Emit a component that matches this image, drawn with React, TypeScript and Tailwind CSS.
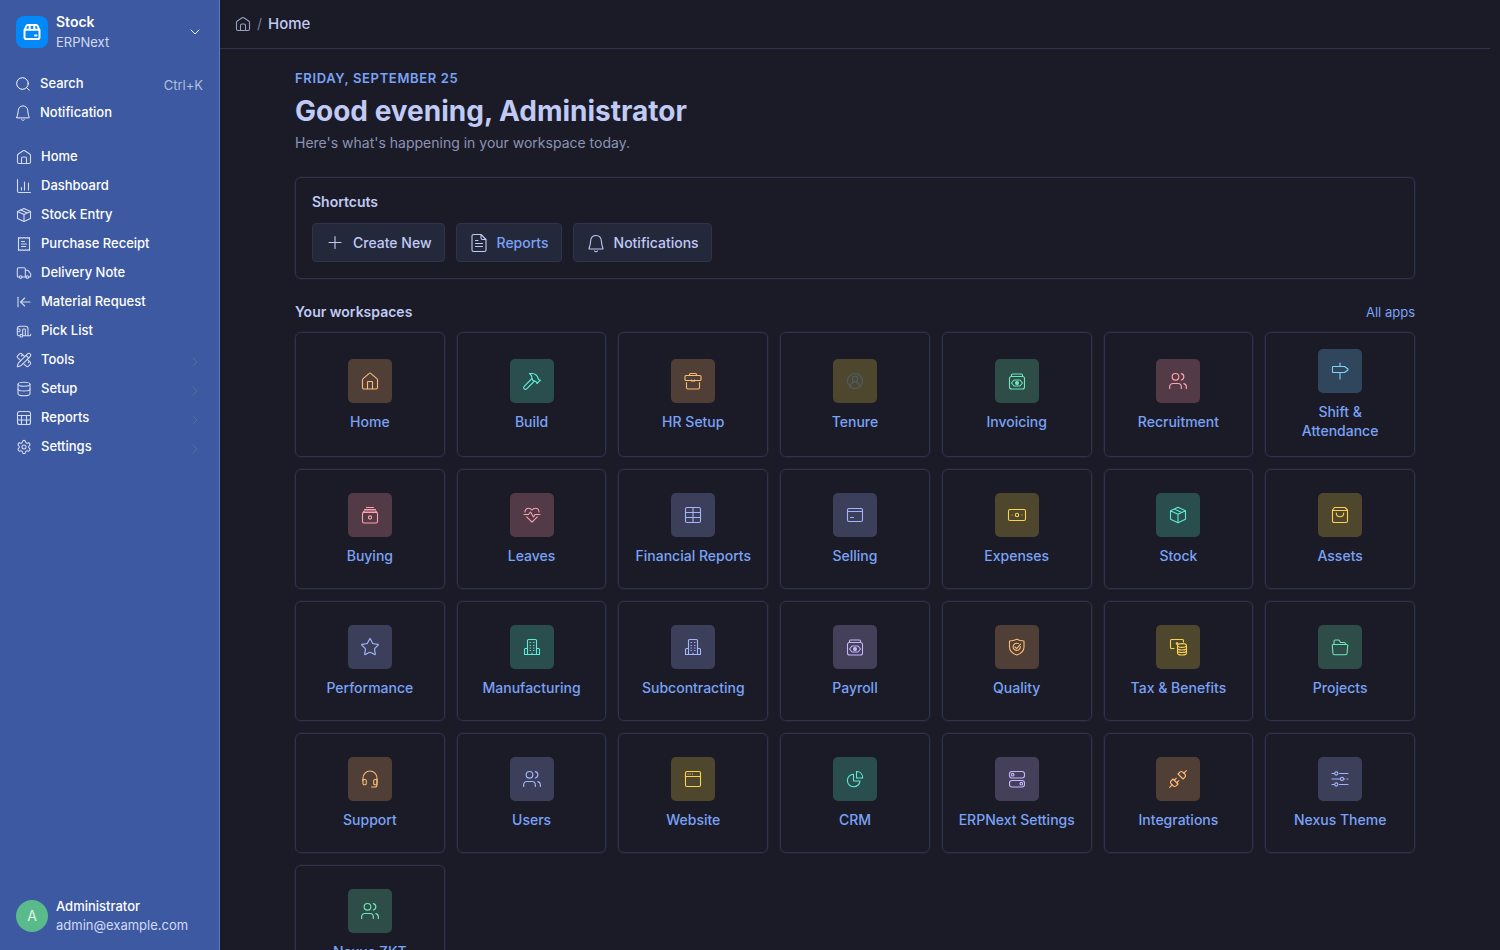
import type { ReactNode } from "react";
import {
  ArrowLeftToLine,
  Caravan,
  ChevronDown,
  ChevronRight,
  Database,
  Hammer,
  PencilRuler,
  Settings,
  Star,
  Truck,
  Unplug,
  Users,
} from "lucide-react";

type SvgProps = { size: number; children: ReactNode; className?: string };

function Svg({ size, children, className }: SvgProps) {
  return (
    <svg
      width={size}
      height={size}
      viewBox={`0 0 ${size} ${size}`}
      fill="none"
      stroke="currentColor"
      strokeWidth="1.1"
      strokeLinecap="round"
      strokeLinejoin="round"
      aria-hidden="true"
      className={className}
    >
      {children}
    </svg>
  );
}

const glyph = (children: ReactNode) => <Svg size={20}>{children}</Svg>;
const small = (children: ReactNode) => <Svg size={16}>{children}</Svg>;

const homeSmall = small(
  <>
    <path d="M1.5 6.4c0-.6.3-1.1.8-1.4L7.2 1.8a1.5 1.5 0 0 1 1.6 0L13.7 5c.5.3.8.8.8 1.4V13c0 .8-.7 1.5-1.5 1.5H3c-.8 0-1.5-.7-1.5-1.5z" />
    <path d="M5.5 14.5V9.500c0-.8.7-1.5 1.5-1.5h2c.8 0 1.5.7 1.5 1.5v5" />
  </>,
);

const packageSmall = small(
  <>
    <path d="M8 1.500 14.500 4.500v7L8 14.500 1.500 11.500v-7z" />
    <path d="M1.500 4.500 8 7.500l6.500-3M8 7.500v7M4.700 3l6.500 3" />
  </>,
);

const bell = (
  <>
    <path d="M3 15.500 3.800 13c.5-1.700.6-3 .8-5 .3-3.300 2.400-5.500 5.400-5.500s5.100 2.200 5.400 5.500c.2 2 .3 3.300.8 5l.8 2.500c.2.400 0 .5-.4.5H3.400c-.4 0-.6-.1-.4-.5z" />
    <path d="M8.500 18c.4.5.9.7 1.500.7s1.100-.2 1.500-.7" />
  </>
);

const icons: Record<string, ReactNode> = {
  home: glyph(<path d="M2.500 8.800c0-.5.2-.9.6-1.200L9.300 2.300a1 1 0 0 1 1.400 0l6.200 5.300c.4.3.6.7.6 1.200V16.500c0 .8-.7 1.500-1.500 1.500H4c-.8 0-1.500-.7-1.500-1.500zM7.500 18v-7c0-.3.200-.5.500-.5h4c.3 0 .5.200.5.500v7" />),
  build: <Hammer size={20} strokeWidth={1.400} />,
  hr: glyph(
    <>
      <path d="M6.500 4.500V3.500c0-.6.400-1 1-1h5c.6 0 1 .4 1 1v1" />
      <path d="M3 4.500h14c.6 0 1 .4 1 1v3c0 .6-.4 1-1 1H3c-.6 0-1-.4-1-1v-3c0-.6.4-1 1-1z" />
      <path d="M8.500 9a.5.5 0 0 0 .5 1h2a.5.5 0 0 0 .5-1M3.500 11.500v5c0 .8.700 1.500 1.500 1.500h10c.8 0 1.500-.7 1.500-1.500v-5" />
    </>,
  ),
  tenure: glyph(
    <>
      <circle cx="10" cy="10" r="7.500" />
      <rect x="7.500" y="5" width="5" height="6" rx="2.500" />
      <path d="M5 15.500c.5-2.500 1.700-3.500 3.500-4.500M15 15.500c-.5-2.500-1.700-3.500-3.500-4.500" />
    </>,
  ),
  money: glyph(
    <>
      <path d="M4.500 5V4c0-.6.400-1 1-1h9c.6 0 1 .4 1 1v1" />
      <rect x="2.500" y="5.500" width="15" height="12.500" rx="2" />
      <path d="M4.500 12 7 9h6l2.500 3-2.500 3H7z" />
      <circle cx="10" cy="12" r="1.500" fill="currentColor" />
    </>,
  ),
  users: <Users size={20} strokeWidth={1.400} />,
  sign: glyph(<path d="M10 2v3.500M10 11.500V18M3 5.500h11.500l3.500 2.500v1l-3.500 2.500H3c-.3 0-.5-.2-.5-.5V6c0-.3.200-.5.500-.5z" />),
  buying: glyph(
    <>
      <path d="M6.500 2.500h7M4.500 4.500h11" />
      <path d="M3 7.500 4.500 6h11L17 7.500" />
      <rect x="2.500" y="7.500" width="15" height="10.500" rx="1.500" />
      <circle cx="10" cy="12.500" r="1.600" />
    </>,
  ),
  heart: glyph(
    <>
      <path d="M3 7c0-2.200 1.500-3.700 3.500-3.700 1.500 0 2.600.6 3.500 1.700.9-1.100 2-1.700 3.500-1.700C15.500 3.300 17 4.800 17 7" />
      <path d="M2 9.500h4.500L8.500 7l3 5 1.500-2.500h5" />
      <path d="M4.700 11.800 10 17.200l5.300-5.400" />
    </>,
  ),
  table: glyph(
    <>
      <rect x="2.500" y="2.500" width="15" height="15" rx="1.500" />
      <path d="M2.500 7.500h15M2.500 12.500h15M10 2.500v15" />
    </>,
  ),
  card: glyph(
    <>
      <rect x="2.500" y="3.500" width="15" height="13" rx="1.500" />
      <path d="M2.500 6.500h15M5.500 12.500h3" />
    </>,
  ),
  cash: glyph(
    <>
      <rect x="1.500" y="4.500" width="17" height="11" rx="1.500" />
      <circle cx="10" cy="10" r="1.700" />
      <path d="M5 10h.1M15 10h.1" />
    </>,
  ),
  box: glyph(<path d="m10 2.300 7.500 3.500v8.400L10 17.700l-7.500-3.500V5.800zM2.500 5.800 10 9.300l7.500-3.500M10 9.300v8.400M6.200 4l7.500 3.500" />),
  bag: glyph(
    <>
      <path d="M4.500 2.500h10.500l2.500 2.500v11c0 .8-.7 1.500-1.500 1.500H4c-.8 0-1.500-.7-1.500-1.500V5z" />
      <path d="M2.500 5.500h15M6.300 8c0 2.200 1.500 3.700 3.700 3.700s3.700-1.500 3.700-3.700" />
    </>,
  ),
  star: <Star size={20} strokeWidth={1.400} />,
  building: glyph(
    <>
      <path d="M5.500 17.500V3.500c0-.6.400-1 1-1h7c.6 0 1 .4 1 1v14" />
      <path d="M5.500 11.500h-2c-.6 0-1 .4-1 1v5h15v-5c0-.6-.4-1-1-1h-2M10 17.500V16" />
      <path d="M8 5.500h.5M11.500 5.500h.5M8 8.500h.5M11.500 8.500h.5M8 11h.5M11.500 11h.5M8 13.500h.5M11.500 13.500h.5" />
    </>,
  ),
  shield: glyph(
    <>
      <path d="M9.800 2.300c2.200 1.200 4.500 1.700 7.200 1.700v6c0 4-2.700 6.500-7.200 8-4.500-1.500-7.300-4-7.300-8V4c2.700 0 5-.5 7.300-1.700z" />
      <path d="M13.300 9.500a3.600 3.600 0 1 1-2-2.900M8 10l1.700 1.700 3.800-4.500" />
    </>,
  ),
  coins: glyph(
    <>
      <path d="M6 11.500H3.500c-.6 0-1-.4-1-1v-7c0-.6.400-1 1-1h11c.6 0 1 .4 1 1V5" />
      <circle cx="9" cy="6.500" r=".8" fill="currentColor" />
      <ellipse cx="14" cy="8.500" rx="4.500" ry="1.900" />
      <path d="M9.500 8.500V16c0 1.100 2 2 4.500 2s4.500-.9 4.500-2V8.500M9.500 11c0 1.100 2 2 4.500 2s4.500-.9 4.500-2M9.500 13.500c0 1.100 2 2 4.500 2s4.500-.9 4.500-2" />
    </>,
  ),
  folder: glyph(
    <>
      <path d="M4 7V4.500c0-.8.500-1.500 1.300-1.500h3c.5 0 1 .2 1.200.7L10.500 5.500H14c.8 0 1.500.5 1.500 1.500" />
      <path d="M3.200 7.500h13.600c.6 0 1 .4.9 1l-.6 7.700c-.1.900-.8 1.500-1.600 1.500h-11c-.8 0-1.500-.6-1.600-1.500L2.300 8.500c-.1-.6.300-1 .9-1z" />
    </>,
  ),
  headset: glyph(
    <>
      <path d="M3 12V9a7 7 0 0 1 14 0v7c0 1.300-.8 2-2 2h-3.500" />
      <path d="M3 10.500h2c.8 0 1.300.5 1.300 1.300v2.700c0 .8-.5 1.300-1.300 1.300h-.7c-.8 0-1.300-.5-1.300-1.300zM17 10.500h-2c-.8 0-1.300.5-1.300 1.300v2.700c0 .8.500 1.300 1.300 1.300h.7c.8 0 1.300-.5 1.300-1.300z" />
    </>,
  ),
  browser: glyph(
    <>
      <rect x="2.500" y="2.500" width="15" height="15" rx="1.500" />
      <path d="M2.500 7.500h15M5 5h.1M7.200 5h.1M9.400 5h.1" />
    </>,
  ),
  pie: glyph(
    <>
      <path d="M8.500 5.200a6.300 6.300 0 1 0 6.500 6.800H9c-.3 0-.5-.2-.5-.5z" />
      <path d="M11.500 2.500v6.500h6.200c0-3.900-2.500-6.500-6.200-6.500z" />
    </>,
  ),
  toggles: glyph(
    <>
      <rect x="2.500" y="2.500" width="15" height="6.500" rx="2.500" />
      <rect x="2.500" y="11.500" width="15" height="6.500" rx="2.500" />
      <circle cx="5.700" cy="5.700" r="1.300" />
      <circle cx="14.300" cy="14.700" r="1.300" />
    </>,
  ),
  plug: <Unplug size={20} strokeWidth={1.400} />,
  sliders: glyph(
    <>
      <path d="M2 4.500h2.300M9.500 4.500H18M2 10h8M14 10h1M17 10h1M2 15.500h2.300M9.500 15.500H18" />
      <circle cx="6.300" cy="4.500" r="1.600" />
      <circle cx="12" cy="10" r="1.600" />
      <circle cx="6.300" cy="15.500" r="1.600" />
    </>,
  ),
};

const tones = {
  orange: "bg-[#4f3f37] text-[#fdba74]",
  teal: "bg-[#2a4d4e] text-[#5eead4]",
  yellow: "bg-[#4f462e] text-[#fcd34d]",
  muted: "bg-[#4f462e] text-[#4b5f6b]",
  green: "bg-[#2e4d49] text-[#6ee7b7]",
  rose: "bg-[#523a46] text-[#fda4af]",
  sky: "bg-[#30465c] text-[#7dd3fc]",
  indigo: "bg-[#3b3f5a] text-[#a5b4fc]",
  violet: "bg-[#45405a] text-[#c4b5fd]",
};

const workspaces: [string, string, keyof typeof tones][] = [
  ["Home", "home", "orange"],
  ["Build", "build", "teal"],
  ["HR Setup", "hr", "orange"],
  ["Tenure", "tenure", "muted"],
  ["Invoicing", "money", "green"],
  ["Recruitment", "users", "rose"],
  ["Shift & Attendance", "sign", "sky"],
  ["Buying", "buying", "rose"],
  ["Leaves", "heart", "rose"],
  ["Financial Reports", "table", "indigo"],
  ["Selling", "card", "indigo"],
  ["Expenses", "cash", "yellow"],
  ["Stock", "box", "teal"],
  ["Assets", "bag", "yellow"],
  ["Performance", "star", "indigo"],
  ["Manufacturing", "building", "teal"],
  ["Subcontracting", "building", "indigo"],
  ["Payroll", "money", "violet"],
  ["Quality", "shield", "orange"],
  ["Tax & Benefits", "coins", "yellow"],
  ["Projects", "folder", "green"],
  ["Support", "headset", "orange"],
  ["Users", "users", "indigo"],
  ["Website", "browser", "yellow"],
  ["CRM", "pie", "teal"],
  ["ERPNext Settings", "toggles", "violet"],
  ["Integrations", "plug", "orange"],
  ["Nexus Theme", "sliders", "indigo"],
  ["Nexus ZKT", "users", "green"],
];

const navItems: { label: string; icon: ReactNode; group?: boolean }[] = [
  { label: "Home", icon: homeSmall },
  {
    label: "Dashboard",
    icon: small(<path d="M1.500 1.500V13c0 .8.700 1.500 1.500 1.500h11.500M5.500 9.500V12M8.500 4v8M12.500 5v7" />),
  },
  { label: "Stock Entry", icon: packageSmall },
  {
    label: "Purchase Receipt",
    icon: small(
      <>
        <path d="M2.500 1.500 4 2.200l1.300-.7 1.300.7L8 1.500l1.400.7 1.300-.7 1.300.7 1.500-.7v13l-1.500-.7-1.300.7-1.300-.7-1.400.7-1.400-.7-1.300.7-1.300-.7-1.500.7z" />
        <path d="M5.500 5.500h3M5.500 8h5M5.500 10.500h4" />
      </>,
    ),
  },
  { label: "Delivery Note", icon: <Truck size={16} strokeWidth={1.600} /> },
  { label: "Material Request", icon: <ArrowLeftToLine size={16} strokeWidth={1.600} /> },
  { label: "Pick List", icon: <Caravan size={16} strokeWidth={1.600} /> },
  { label: "Tools", icon: <PencilRuler size={16} strokeWidth={1.600} />, group: true },
  { label: "Setup", icon: <Database size={16} strokeWidth={1.600} />, group: true },
  {
    label: "Reports",
    icon: small(
      <>
        <rect x="1.500" y="1.500" width="13" height="13" rx="2" />
        <path d="M1.500 5.500h13M1.500 10h13M5.500 5.500v9M10.500 5.500v9" />
      </>,
    ),
    group: true,
  },
  { label: "Settings", icon: <Settings size={16} strokeWidth={1.600} />, group: true },
];

function Sidebar() {
  return (
    <aside className="flex w-[220px] shrink-0 flex-col border-r border-[#5f7ac0] bg-[#3d59a1] text-[13px] font-medium text-white">
      <button type="button" className="flex items-center gap-2 px-4 pt-3 text-left">
        <span className="flex size-8 shrink-0 items-center justify-center rounded-lg bg-[#0289f7]">
          <svg width="18" height="18" viewBox="0 0 18 18" fill="none" stroke="#fff" strokeWidth="2" strokeLinejoin="round" strokeLinecap="round" aria-hidden="true">
            <path d="M1.500 7.500 3.300 3c.3-.6.800-1 1.500-1h8.400c.7 0 1.200.4 1.500 1l1.800 4.500v6.700c0 1-.8 1.800-1.800 1.800H3.300c-1 0-1.800-.8-1.800-1.800zM1.500 6.800h15M6.800 2.500 6.500 6.500M11.200 2.500l.3 4" />
            <path d="M12 12.500h1.500" />
          </svg>
        </span>
        <span className="grow">
          <span className="block text-sm leading-5 font-semibold">Stock</span>
          <span className="block leading-5 font-normal text-[#d3dbf3]">ERPNext</span>
        </span>
        <ChevronDown size={16} strokeWidth={1.400} />
      </button>

      <div className="mt-[18px] flex flex-col gap-px">
        <button type="button" className="flex h-7 items-center gap-[10px] px-4 text-left">
          <svg width="14" height="14" viewBox="0 0 14 14" fill="none" stroke="currentColor" strokeLinecap="round" aria-hidden="true">
            <circle cx="6.500" cy="6.500" r="5.800" />
            <path d="m11 11 2.300 2.300" />
          </svg>
          <span className="grow">Search</span>
          <span className="pt-1 font-normal text-[#b1bddd]">Ctrl+K</span>
        </button>
        <button type="button" className="flex h-7 items-center gap-[10px] px-4 text-left text-white">
          <svg width="14" height="16" viewBox="2.500 1.500 15 18" fill="none" stroke="currentColor" strokeLinecap="round" strokeLinejoin="round" aria-hidden="true">
            {bell}
          </svg>
          <span>Notification</span>
        </button>
      </div>

      <nav className="mt-4 flex grow flex-col gap-px" aria-label="Stock">
        {navItems.map((item) => (
          <a key={item.label} href="#" className="flex h-7 items-center gap-[9px] px-4">
            <span className="text-[#d5dcef]">{item.icon}</span>
            <span className="grow">{item.label}</span>
            {item.group && <ChevronRight size={16} strokeWidth={1.400} className="mt-1 text-[#4f7590]" />}
          </a>
        ))}
      </nav>

      <button type="button" className="flex items-center gap-2 px-4 pb-[15px] text-left">
        <span className="flex size-8 shrink-0 items-center justify-center rounded-full bg-[#59ba8b] text-sm font-normal text-[#e4f5e9]">A</span>
        <span>
          <span className="block leading-[19px]">Administrator</span>
          <span className="block leading-[19px] font-normal text-[#d3dbf3]">admin@example.com</span>
        </span>
      </button>
    </aside>
  );
}

const shortcutClass = "flex items-center gap-2 rounded-[4px] border border-[#2f334d] bg-[#24283b] px-3 py-2 text-sm leading-[21px] font-medium";

export default function App() {
  return (
    <div className="flex h-screen bg-[#1a1b26] font-['Inter',sans-serif] text-[#c0caf5]">
      <Sidebar />
      <div className="min-w-0 grow overflow-y-auto pr-[10px] [scrollbar-width:none]">
        <header className="flex h-[49px] items-center gap-[6px] border-b border-[#2f334d] px-[15px]">
          <a href="#" aria-label="Home" className="text-[#9aa0c4]">{homeSmall}</a>
          <span className="text-sm text-[#787c99]">/</span>
          <span className="text-[15px] font-medium">Home</span>
        </header>

        <main className="mx-auto max-w-[1160px] px-5 pt-[19px] pb-10">
          <p className="text-[13px] leading-5 font-semibold tracking-wider text-[#7aa2f7] uppercase">Friday, September 25</p>
          <h1 className="mt-[5px] text-[28px] leading-9 font-bold">Good evening, Administrator</h1>
          <p className="mt-1 text-sm leading-5 text-[#8c93b5]">Here's what's happening in your workspace today.</p>

          <section className="mt-6 rounded-md border border-[#2f334d] p-4 shadow-[0_0_2px_#2f334d]">
            <h2 className="text-sm leading-4 font-semibold">Shortcuts</h2>
            <div className="mt-[13px] flex flex-wrap gap-[11px]">
              <button type="button" className={shortcutClass}>
                {glyph(<path d="M4 9.500h12M10 3.500v12" />)}
                Create New
              </button>
              <a href="#" className={shortcutClass}>
                {glyph(
                  <>
                    <path d="M12 1.500H4.500c-1.100 0-1.500.4-1.500 1.500v14c0 1.100.4 1.500 1.500 1.500h11c1.100 0 1.500-.4 1.500-1.500V6.500zM12 1.500V5c0 1 .5 1.500 1.500 1.500H17" />
                    <path d="M6.500 7.500H9M6.500 10.500h7M6.500 13.500h7" />
                  </>,
                )}
                <span className="text-[#7aa2f7]">Reports</span>
              </a>
              <button type="button" className={shortcutClass}>
                {glyph(bell)}
                Notifications
              </button>
            </div>
          </section>

          <div className="mt-6 flex items-center justify-between leading-[18px]">
            <h2 className="text-sm leading-[18px] font-semibold">Your workspaces</h2>
            <a href="#" className="text-[13px] text-[#7aa2f7]">All apps</a>
          </div>

          <div className="mt-[11px] grid grid-cols-7 gap-3">
            {workspaces.map(([label, icon, tone]) => (
              <a
                key={label}
                href="#"
                className="flex min-h-[120px] flex-col items-center justify-center gap-[9px] rounded-md border border-[#2f334d] px-[13px] py-4 text-center text-sm leading-[19px] font-medium text-[#7aa2f7] shadow-[0_0_2px_#2f334d]"
              >
                <span className={`flex size-11 items-center justify-center rounded-[5px] ${tones[tone]}`}>{icons[icon]}</span>
                {label}
              </a>
            ))}
          </div>
        </main>
      </div>
    </div>
  );
}
